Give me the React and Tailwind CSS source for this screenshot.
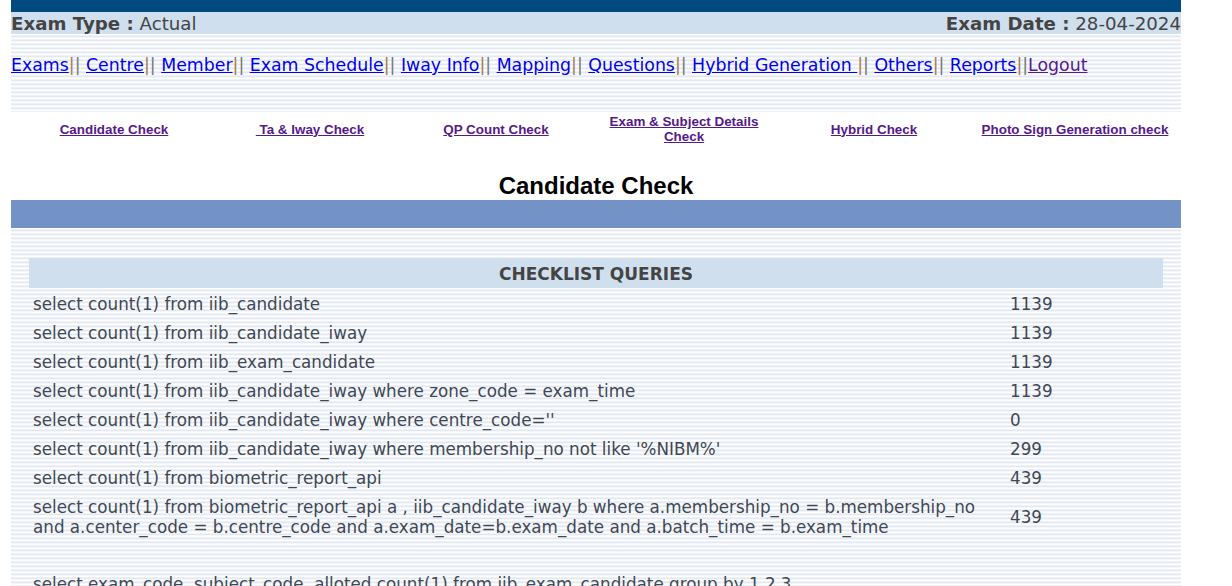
import React from "react";

const stripe =
  "bg-[repeating-linear-gradient(to_bottom,#ffffff_0px,#ffffff_1px,#eef2f8_1px,#eef2f8_2px,#e2e9f2_2px,#e2e9f2_3px,#f5f7fb_3px,#f5f7fb_4px)]";

const navItems = [
  "Exams",
  "Centre",
  "Member",
  "Exam Schedule",
  "Iway Info",
  "Mapping",
  "Questions",
  "Hybrid Generation ",
  "Others",
  "Reports",
];

const rows = [
  ["select count(1) from iib_candidate", "1139"],
  ["select count(1) from iib_candidate_iway", "1139"],
  ["select count(1) from iib_exam_candidate", "1139"],
  ["select count(1) from iib_candidate_iway where zone_code = exam_time", "1139"],
  ["select count(1) from iib_candidate_iway where centre_code=''", "0"],
  ["select count(1) from iib_candidate_iway where membership_no not like '%NIBM%'", "299"],
  ["select count(1) from biometric_report_api", "439"],
];

export default function App() {
  return (
    <div className="w-[1232px] h-[586px] overflow-hidden bg-white font-['DejaVu_Sans',Verdana,sans-serif]">
      <div className="ml-[11px] w-[1170px]">
        <div className="h-[12px] bg-[#014a80]" />
        <div className="h-[22px] bg-[#d0dfee] flex items-center justify-between text-[18.2px] text-[#444] leading-none pt-[2px]">
          <div className="whitespace-nowrap">
            <span className="font-bold">Exam Type :</span> Actual
          </div>
          <div className="whitespace-nowrap">
            <span className="font-bold">Exam Date :</span> 28-04-2024
          </div>
        </div>
        <div className={`${stripe} h-[78px] pt-[21px]`}>
          <div className="text-[17.35px] leading-[20px] whitespace-nowrap">
            {navItems.map((n, i) => (
              <React.Fragment key={n}>
                <a href="#" className="text-[#0000ee] underline">
                  {n}
                </a>
                <span className="text-[#a87a4c]">|</span>
                <span className="text-[#777]">|</span>
                {i < navItems.length - 1 ? " " : ""}
              </React.Fragment>
            ))}
            <a href="#" className="text-[#551a8b] underline">
              Logout
            </a>
          </div>
        </div>
        <div className="h-[88px] bg-white">
          <div className="grid grid-cols-[206px_186px_186px_190px_190px_212px] h-[34px] items-center font-['Liberation_Sans',Arial,sans-serif] font-bold text-[13.4px] leading-[15px] text-[#551a8b] text-center">
            <div><a href="#" className="underline">Candidate Check</a></div>
            <div><a href="#" className="underline">&nbsp;Ta &amp; Iway Check</a></div>
            <div><a href="#" className="underline">QP Count Check</a></div>
            <div><a href="#" className="underline">Exam &amp; Subject Details<br />Check</a></div>
            <div><a href="#" className="underline">Hybrid Check</a></div>
            <div><a href="#" className="underline">Photo Sign Generation check</a></div>
          </div>
          <h1 className="mt-[27px] text-center font-['Liberation_Sans',Arial,sans-serif] font-bold text-[24px] leading-[26px] text-black">
            Candidate Check
          </h1>
        </div>
        <div className="h-[28px] bg-[#7393c6]" />
        <div className={`${stripe} h-[400px] pt-[30px] px-[18px]`}>
          <div className="h-[30px] bg-[#d0dfee] flex items-center justify-center font-bold text-[17px] text-[#444] pt-[3px]">
            CHECKLIST QUERIES
          </div>
          <div className="text-[16.75px] text-[#3f4853] mt-[2px]">
            {rows.map(([q, v]) => (
              <div key={q} className="grid grid-cols-[977px_1fr] h-[29px] items-center">
                <div className="pl-[4px] whitespace-nowrap">{q}</div>
                <div className="pl-[4px]">{v}</div>
              </div>
            ))}
            <div className="grid grid-cols-[977px_1fr] h-[48px] items-center leading-[20px]">
              <div className="pl-[4px] whitespace-nowrap">
                select count(1) from biometric_report_api a , iib_candidate_iway b where a.membership_no = b.membership_no
                <br />
                and a.center_code = b.centre_code and a.exam_date=b.exam_date and a.batch_time = b.exam_time
              </div>
              <div className="pl-[4px]">439</div>
            </div>
            <div className="h-[29px]" />
            <div className="grid grid-cols-[977px_1fr] h-[29px] items-center">
              <div className="pl-[4px] whitespace-nowrap">
                select exam_code, subject_code, alloted count(1) from iib_exam_candidate group by 1,2,3
              </div>
              <div className="pl-[4px]"></div>
            </div>
          </div>
        </div>
      </div>
    </div>
  );
}
